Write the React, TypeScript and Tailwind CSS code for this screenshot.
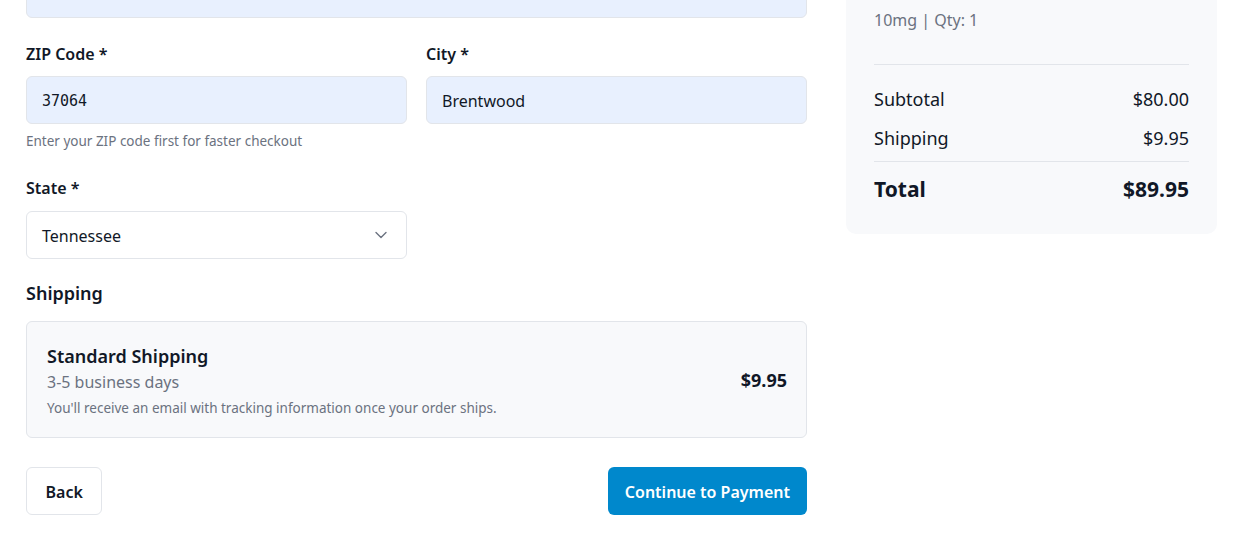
import React from "react";

const font = { fontFamily: '"Noto Sans", "Open Sans", sans-serif' };

function Label({ children, mb = "mb-[10px]" }: { children: React.ReactNode; mb?: string }) {
  return (
    <div className={`text-[16px] leading-[24px] font-semibold text-[#111827] ${mb}`}>
      {children}
    </div>
  );
}

export default function App() {
  return (
    <div
      className="h-[538px] w-[1241px] overflow-hidden bg-white text-[#111827]"
      style={font}
    >
      <div className="flex items-start gap-[39px] pl-[26px]">
        {/* Left column */}
        <div className="w-[781px] -mt-[30px] flex flex-col">
          <div className="h-[48px] rounded-[6px] border border-[#e2e5ea] bg-[#e8f0fe] px-[15px] flex items-center text-[16px]">
            3402 West Hamilton Avenue
          </div>

          <div className="mt-[24px] grid grid-cols-2 gap-x-[19px]">
            <div>
              <Label>ZIP Code *</Label>
              <div
                className="h-[48px] rounded-[6px] border border-[#e2e5ea] bg-[#e8f0fe] px-[15px] pt-[2px] flex items-center text-[15px]"
                style={{ fontFamily: '"DejaVu Sans Mono", monospace' }}
              >
                37064
              </div>
              <div className="mt-[8px] text-[13.5px] leading-[18px] text-[#6b7280]">
                Enter your ZIP code first for faster checkout
              </div>
            </div>
            <div>
              <Label>City *</Label>
              <div className="h-[48px] rounded-[6px] border border-[#e2e5ea] bg-[#e8f0fe] px-[15px] pt-[1px] flex items-center text-[16px]">
                Brentwood
              </div>
            </div>
          </div>

          <div className="mt-[26px] w-[381px]">
            <Label mb="mb-[11px]">State *</Label>
            <div className="h-[48px] rounded-[6px] border border-[#e2e5ea] bg-white pl-[15px] pr-[19px] pt-[2px] flex items-center justify-between text-[16px]">
              <span>Tennessee</span>
              <svg width="12" height="8" viewBox="0 0 12 8" fill="none" className="-mt-[2px]">
                <path
                  d="M1 1.5L6 6.5L11 1.5"
                  stroke="#6b7280"
                  strokeWidth="1.4"
                  strokeLinecap="round"
                  strokeLinejoin="round"
                />
              </svg>
            </div>
          </div>

          <div className="mt-[20px] text-[18px] leading-[28px] font-semibold">
            Shipping
          </div>

          <div className="mt-[14px] rounded-[6px] border border-[#e2e5ea] bg-[#f8f9fb] pl-[20px] pr-[19px] pt-[20px] pb-[19px] flex items-center justify-between">
            <div>
              <div className="text-[18px] leading-[28px] font-semibold">
                Standard Shipping
              </div>
              <div className="text-[16px] leading-[24px] text-[#6b7280]">
                3-5 business days
              </div>
              <div className="mt-[4px] text-[13.5px] leading-[20px] text-[#6b7280]">
                You'll receive an email with tracking information once your order ships.
              </div>
            </div>
            <div className="text-[18px] font-bold">$9.95</div>
          </div>

          <div className="mt-[29px] flex items-center justify-between">
            <button className="h-[48px] rounded-[6px] border border-[#e2e5ea] bg-white px-[18.5px] pt-[2px] text-[16px] font-semibold text-[#111827]">
              Back
            </button>
            <button className="h-[48px] rounded-[6px] bg-[#0088cc] px-[17px] pt-[2px] text-[16px] font-semibold text-white">
              Continue to Payment
            </button>
          </div>
        </div>

        {/* Right card */}
        <div className="w-[371px] -mt-[58px] rounded-[10px] bg-[#f8f9fb] px-[28px] pt-[32px] pb-[31px]">
          <div className="pb-[32px] border-b border-[#e2e5ea]">
            <div className="flex justify-between text-[16px] leading-[24px] font-semibold">
              <span>Semaglutide</span>
              <span className="text-[#16a34a]">$80.00</span>
            </div>
            <div className="mt-[10px] text-[16px] leading-[24px] text-[#6b7280]">
              10mg | Qty: 1
            </div>
          </div>
          <div className="pt-[20px] flex flex-col gap-[11px] text-[18px] leading-[28px]">
            <div className="flex justify-between">
              <span>Subtotal</span>
              <span>$80.00</span>
            </div>
            <div className="flex justify-between">
              <span>Shipping</span>
              <span>$9.95</span>
            </div>
          </div>
          <div className="mt-[9px] border-t border-[#e2e5ea] pt-[13px] flex justify-between text-[21px] leading-[28px] font-bold">
            <span>Total</span>
            <span>$89.95</span>
          </div>
        </div>
      </div>
    </div>
  );
}
